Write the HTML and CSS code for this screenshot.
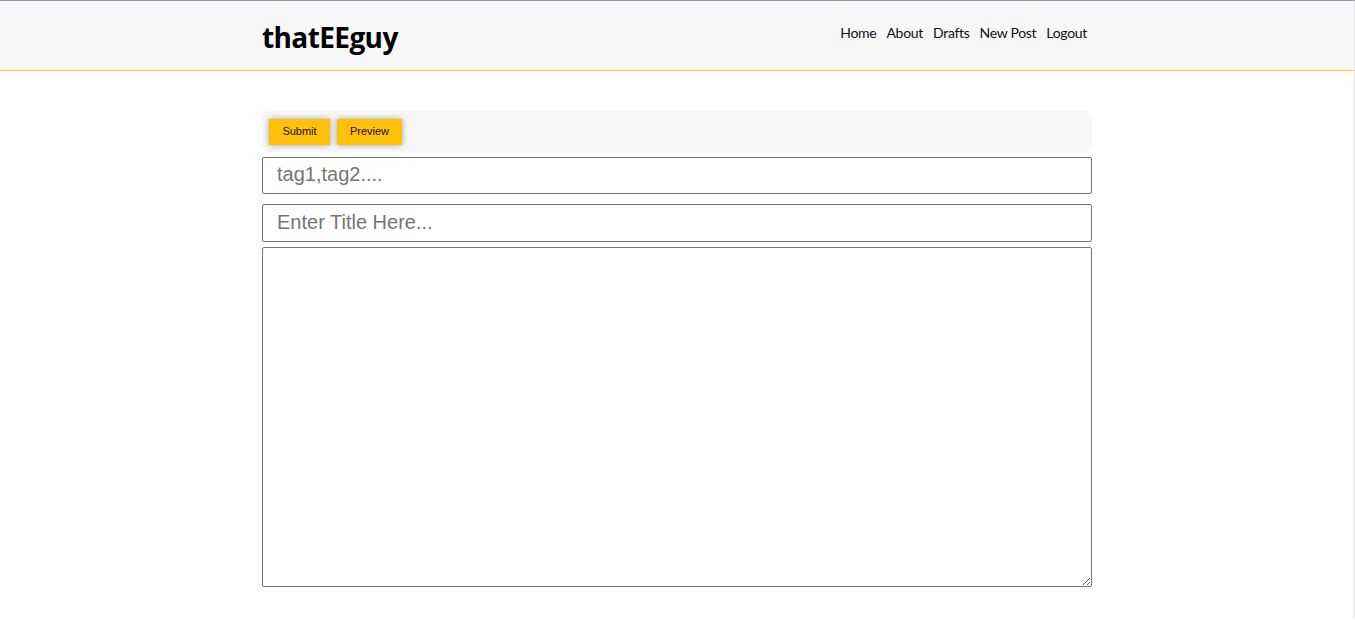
FILE: index.html
```html
<!DOCTYPE html>
<html>
<head>
<meta charset="utf-8">
<link rel="stylesheet" href="styles.css">
</head>
<body>
<header class="header">
  <div class="container header-inner">
    <a class="logo" href="#">thatEEguy</a>
    <nav class="nav">
      <a href="#">Home</a>
      <a href="#">About</a>
      <a href="#">Drafts</a>
      <a href="#">New Post</a>
      <a href="#">Logout</a>
    </nav>
  </div>
</header>
<main class="container main">
  <div class="toolbar">
    <button class="btn">Submit</button>
    <button class="btn">Preview</button>
  </div>
  <input class="field tags" type="text" placeholder="tag1,tag2....">
  <input class="field title" type="text" placeholder="Enter Title Here...">
  <textarea class="body-text"></textarea>
</main>
</body>
</html>
```
FILE: styles.css
```css
html, body {
  margin: 0;
  padding: 0;
}
body {
  background: #fff;
  border-top: 1px solid #8a99ae;
  border-right: 1px solid #e6e6e6;
  min-height: 619px;
  box-sizing: border-box;
  font-family: Lato, "Noto Sans", sans-serif;
}
.container {
  width: 830px;
  margin: 0 auto;
}
.header {
  background: #f7f7f7;
  border-bottom: 1px solid #ffd500;
  height: 69px;
}
.header-inner {
  display: flex;
  align-items: center;
  justify-content: space-between;
  height: 100%;
}
.logo {
  font-family: "Open Sans", sans-serif;
  font-weight: 700;
  font-size: 28px;
  color: #000;
  text-decoration: none;
  letter-spacing: -0.6px;
  margin-top: 3px;
}
.nav {
  display: flex;
  gap: 10px;
  margin-right: 5px;
  margin-bottom: 7px;
}
.nav a {
  color: #111;
  text-decoration: none;
  font-size: 14px;
  letter-spacing: -0.3px;
}
.main {
  padding-top: 40px;
  display: flex;
  flex-direction: column;
}
.toolbar {
  background: #f7f7f7;
  border-radius: 6px;
  height: 41px;
  display: flex;
  align-items: center;
  gap: 7px;
  padding: 0 7px;
  box-sizing: border-box;
}
.btn {
  background: #ffc107;
  border: none;
  height: 26px;
  padding: 0 0 2px;
  font-family: "Liberation Sans", Arial, sans-serif;
  font-size: 11px;
  color: #111;
  box-shadow: 0 0 6px rgba(0,0,0,0.35);
}
.btn:first-child { width: 61px; }
.btn:last-child { width: 65px; }
.field {
  box-sizing: border-box;
  width: 830px;
  height: 37px;
  border: 1px solid #767676;
  border-radius: 2px;
  padding: 0 14px 2px;
  font-family: "Liberation Sans", Arial, sans-serif;
  font-size: 20px;
  color: #333;
  background: #fff;
  outline: none;
}
.field::placeholder {
  color: #757575;
}
.tags { margin-top: 5px; }
.title { margin-top: 10px; height: 38px; }
.body-text {
  box-sizing: border-box;
  width: 830px;
  height: 340px;
  margin-top: 5px;
  border: 1px solid #767676;
  border-radius: 2px;
  resize: vertical;
  display: block;
  outline: none;
}
```
